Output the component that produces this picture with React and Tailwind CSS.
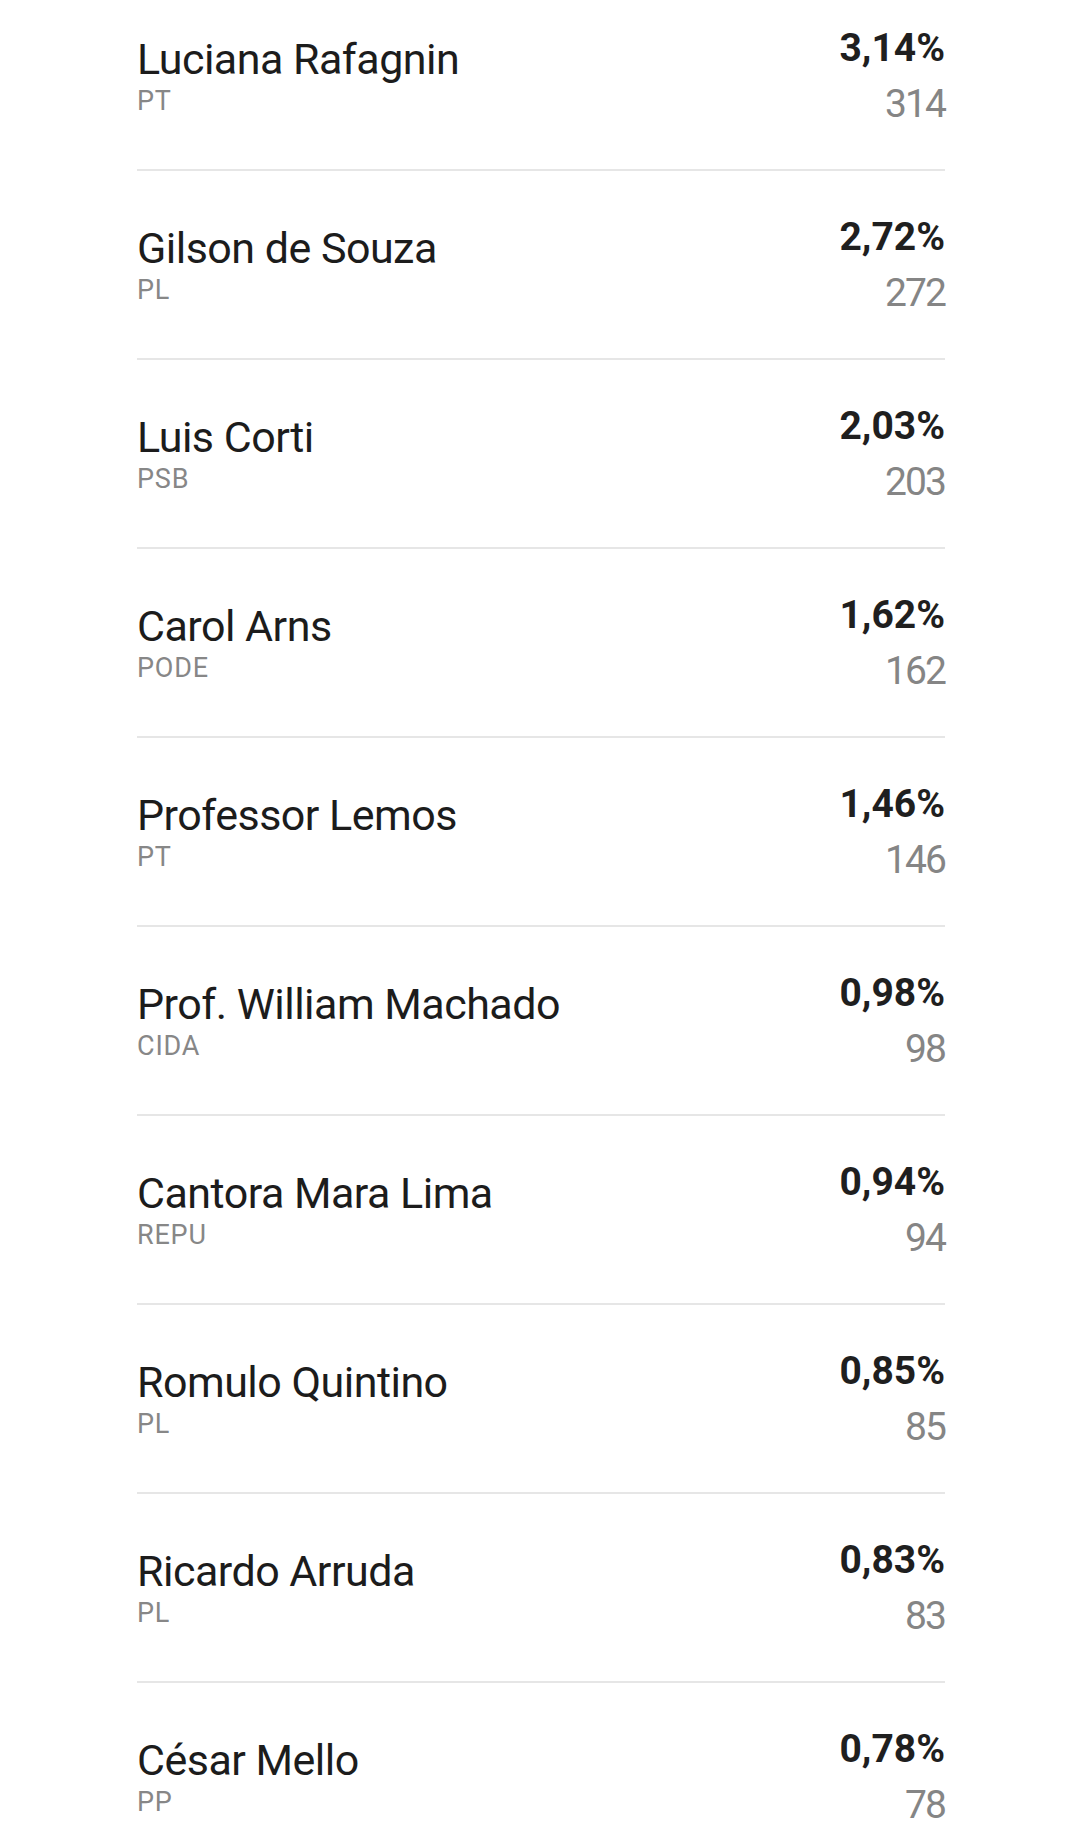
import React from 'react';

const candidates = [
    { name: 'Luciana Rafagnin', party: 'PT', pct: '3,14%', votes: '314' },
    { name: 'Gilson de Souza', party: 'PL', pct: '2,72%', votes: '272' },
    { name: 'Luis Corti', party: 'PSB', pct: '2,03%', votes: '203' },
    { name: 'Carol Arns', party: 'PODE', pct: '1,62%', votes: '162' },
    { name: 'Professor Lemos', party: 'PT', pct: '1,46%', votes: '146' },
    { name: 'Prof. William Machado', party: 'CIDA', pct: '0,98%', votes: '98' },
    { name: 'Cantora Mara Lima', party: 'REPU', pct: '0,94%', votes: '94' },
    { name: 'Romulo Quintino', party: 'PL', pct: '0,85%', votes: '85' },
    { name: 'Ricardo Arruda', party: 'PL', pct: '0,83%', votes: '83' },
    { name: 'César Mello', party: 'PP', pct: '0,78%', votes: '78' },
];

const CandidateRow = ({ name, party, pct, votes }) => (
    <div className="h-[189px] border-b-2 border-[#e6e6e6] pt-[43px] flex justify-between items-start">
        <div className="mt-[8px] font-['Roboto',sans-serif]">
            <div className="text-[43px] leading-[52px] tracking-[-0.012em] text-[#1c1c1c]">{name}</div>
            <div className="text-[27px] leading-[32px] tracking-[0.03em] text-[#878787]">{party}</div>
        </div>
        <div className="text-right font-['Roboto',sans-serif]">
            <div className="text-[39px] leading-[46px] font-bold text-[#1f1f1f]">{pct}</div>
            <div className="text-[39px] leading-[66px] font-normal text-[#858585] tracking-[-0.05em]">{votes}</div>
        </div>
    </div>
);

const App = () => {
    return (
        <div className="min-h-screen bg-white overflow-hidden">
            <div className="-mt-[18px] pl-[137px] pr-[135px]">
                {candidates.map((c) => (
                    <CandidateRow key={c.name} {...c} />
                ))}
            </div>
        </div>
    );
};

export default App;
